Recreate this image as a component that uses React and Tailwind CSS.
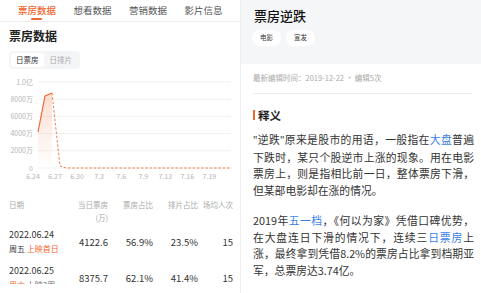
import React from 'react';

const ORANGE = '#f0662e';

const tabs = ['票房数据', '想看数据', '营销数据', '影片信息'];

const rows = [
  { date: '2022.06.24', week: '周五', weekColor: 'text-[#333]', note: '上映首日', noteColor: 'text-[#f0662e]', box: '4122.6', share: '56.9%', shows: '23.5%', avg: '15' },
  { date: '2022.06.25', week: '周六', weekColor: 'text-[#f0662e]', note: '上映3周', noteColor: 'text-[#666]', box: '8375.7', share: '62.1%', shows: '41.4%', avg: '15' },
];

// chart geometry
const yLabels = ['1.0亿', '8000万', '6000万', '4000万', '2000万', '0'];
const xLabels = ['6.24', '6.27', '6.30', '7.3', '7.6', '7.9', '7.13', '7.16', '7.19'];

const BoxChart = () => {
  const top = 10;
  const step = 17.2;
  const bottom = top + step * 5;
  return (
    <svg width="240" height="114" className="block">
      <defs>
        <linearGradient id="area" x1="0" y1="0" x2="0" y2="1">
          <stop offset="0%" stopColor={ORANGE} stopOpacity="0.22" />
          <stop offset="100%" stopColor={ORANGE} stopOpacity="0" />
        </linearGradient>
      </defs>
      {yLabels.map((l, i) => (
        <g key={l}>
          <text x="33" y={top + i * step + 2.5} fontSize="7" fill="#b5b5b5" textAnchor="end">{l}</text>
          <line x1="38" x2="231" y1={top + i * step} y2={top + i * step} stroke="#f0f0f0" strokeWidth="1" />
        </g>
      ))}
      {xLabels.map((l, i) => (
        <text key={l} x={33 + i * 22.05} y={bottom + 11} fontSize="7" fill="#b5b5b5" textAnchor="middle">{l}</text>
      ))}
      <path d={`M38 ${bottom - 36} L45 ${top + 14} L52 ${top + 11} L52 ${bottom} L38 ${bottom} Z`} fill="url(#area)" />
      <polyline points={`38,${bottom - 36} 45,${top + 14} 52,${top + 11}`} fill="none" stroke={ORANGE} strokeWidth="1.2" strokeLinejoin="round" />
      <polyline points={`52,${top + 11} 60,${bottom - 2} 66,${bottom} 231,${bottom}`} fill="none" stroke={ORANGE} strokeWidth="1" strokeDasharray="2.5 1.8" opacity="0.85" />
    </svg>
  );
};

const LeftPanel = () => (
  <div className="relative w-[240px] shrink-0 bg-white flex flex-col">
    <div className="flex h-[22px] border-b border-[#f0f0f0] pl-[18px] text-[9.5px]">
      {tabs.map((t, i) => (
        <div key={t} className="relative w-[56px] pt-[3px]">
          <span className={i === 0 ? 'text-[#f0662e] font-medium' : 'text-[#555]'}>{t}</span>
          {i === 0 && <div className="absolute left-[13px] top-[18px] w-[11px] h-[2px] rounded bg-[#f0662e]" />}
        </div>
      ))}
    </div>
    <div className="px-[9px] pt-[6px]">
      <div className="text-[12px] font-bold text-[#222] leading-[16px]">票房数据</div>
      <div className="mt-[7px] inline-flex items-center h-[18px] p-[2px] rounded bg-[#f4f5f7] text-[7.5px]">
        <div className="h-full px-[5px] flex items-center rounded-[3px] bg-white text-[#333]">日票房</div>
        <div className="px-[6px] text-[#aaa]">日排片</div>
      </div>
    </div>
    <div className="mt-[3px]">
      <BoxChart />
    </div>
    <div className="px-[9px] pr-[7px] mt-[12px] text-[#333] flex flex-col">
      <div className="grid grid-cols-[66px_33px_45px_45px_1fr] text-[7.5px] text-[#aaa] leading-[13px]">
        <div>日期</div>
        <div className="text-right">当日票房<br />(万)</div>
        <div className="text-right">票房占比</div>
        <div className="text-right">排片占比</div>
        <div className="text-right">场均人次</div>
      </div>
      {rows.map((r, i) => (
        <div
          key={r.date}
          className={`grid grid-cols-[66px_33px_45px_45px_1fr] items-center h-[28px] leading-[14px] ${i === 0 ? 'mt-[4px]' : 'mt-[8px]'}`}
        >
          <div className="text-[9px]">
            <div className="leading-[14px]">{r.date}</div>
            <div className="text-[8px] leading-[14px]">
              <span className={r.weekColor}>{r.week}</span>{' '}
              <span className={r.noteColor}>{r.note}</span>
            </div>
          </div>
          <div className="text-right text-[9.5px]">{r.box}</div>
          <div className="text-right text-[9.5px]">{r.share}</div>
          <div className="text-right text-[9.5px]">{r.shows}</div>
          <div className="text-right text-[9.5px]">{r.avg}</div>
        </div>
      ))}
    </div>
    <div className="absolute left-0 right-0 top-[284px] h-[12px] bg-white" />
  </div>
);

const Link = ({ children }) => <span className="text-[#3b7fe6]">{children}</span>;

const Quote = ({ children }) => <span className="font-['Noto_Sans',sans-serif]">{children}</span>;

const RightPanel = () => (
  <div className="flex-1 bg-white border-l border-[#eeeeee] flex flex-col">
    <div className="bg-[#f5f6f8] h-[64px] px-[11px] pt-[6px]">
      <div className="pl-[2px] text-[13px] font-medium text-[#111] leading-[20px]">票房逆跌</div>
      <div className="mt-[4px] flex gap-[5px] text-[6.5px] text-[#333]">
        <span className="h-[16px] w-[29px] rounded-full bg-white flex items-center justify-center">电影</span>
        <span className="h-[16px] w-[29px] rounded-full bg-white flex items-center justify-center">宣发</span>
      </div>
    </div>
    <div className="pl-[12px] pr-[7px]">
      <div className="pt-[8px] pb-[9px] mr-[2px] text-[7.5px] text-[#aaa] border-b border-[#eeeeee] leading-[12px]">
        最新编辑时间：2019-12-22 · 编辑5次
      </div>
      <div className="mt-[14px] flex items-center gap-[3px]">
        <div className="w-[2px] h-[10px] bg-[#f0662e]" />
        <div className="text-[11.5px] font-bold text-[#222] leading-[14px]">释义</div>
      </div>
      <p className="mt-[9px] text-[10.8px] leading-[16.5px] text-[#333] text-justify">
        <Quote>"</Quote>逆跌<Quote>"</Quote>原来是股市的用语，一般指在<Link>大盘</Link>普遍下跌时，某只个股逆市上涨的现象。用在电影票房上，则是指相比前一日，整体票房下滑，但某部电影却在涨的情况。
      </p>
      <p className="mt-[14px] text-[10.8px] leading-[16.5px] text-[#333] text-justify">
        2019年<Link>五一档</Link>，《何以为家》凭借口碑优势，在大盘连日下滑的情况下，连续三<Link>日票房</Link>上涨，最终拿到凭借8.2%的票房占比拿到档期亚军，总票房达3.74亿。
      </p>
    </div>
  </div>
);

export default function App() {
  return (
    <div className="w-[481px] h-[293px] overflow-hidden flex bg-white font-['Noto_Sans_CJK_SC','Noto_Sans',sans-serif]">
      <LeftPanel />
      <RightPanel />
    </div>
  );
}
